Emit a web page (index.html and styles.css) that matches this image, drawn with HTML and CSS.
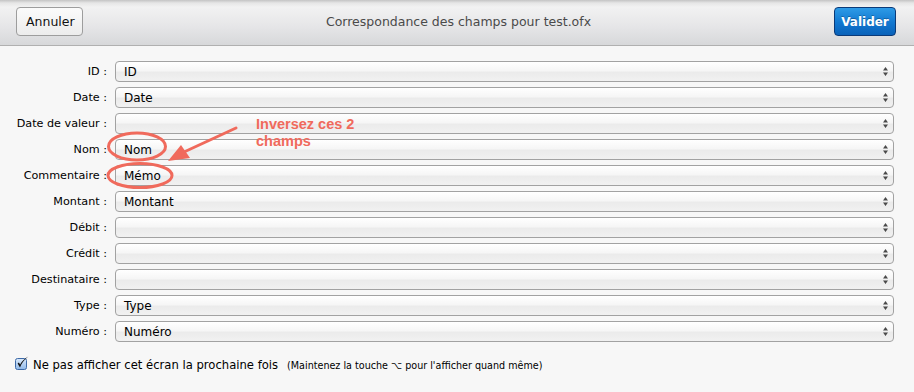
FILE: index.html
```html
<!DOCTYPE html>
<html lang="fr">
<head>
<meta charset="utf-8">
<title>Correspondance des champs</title>
<link rel="stylesheet" href="styles.css">
</head>
<body>
<div class="sheet">
  <header class="toolbar">
    <button class="btn">Annuler</button>
    <div class="title">Correspondance des champs pour test.ofx</div>
    <button class="btn primary">Valider</button>
  </header>

  <main class="form">
    <div class="row"><span class="label">ID :</span><div class="popup"><span>ID</span><svg class="step" viewBox="0 0 5 9"><path d="M2.5 0 5 3.5H0z M0 5.5h5L2.5 9z"/></svg></div></div>
    <div class="row"><span class="label">Date :</span><div class="popup"><span>Date</span><svg class="step" viewBox="0 0 5 9"><path d="M2.5 0 5 3.5H0z M0 5.5h5L2.5 9z"/></svg></div></div>
    <div class="row"><span class="label">Date de valeur :</span><div class="popup"><span></span><svg class="step" viewBox="0 0 5 9"><path d="M2.5 0 5 3.5H0z M0 5.5h5L2.5 9z"/></svg></div></div>
    <div class="row"><span class="label">Nom :</span><div class="popup"><span>Nom</span><svg class="step" viewBox="0 0 5 9"><path d="M2.5 0 5 3.5H0z M0 5.5h5L2.5 9z"/></svg></div></div>
    <div class="row"><span class="label">Commentaire :</span><div class="popup"><span>Mémo</span><svg class="step" viewBox="0 0 5 9"><path d="M2.5 0 5 3.5H0z M0 5.5h5L2.5 9z"/></svg></div></div>
    <div class="row"><span class="label">Montant :</span><div class="popup"><span>Montant</span><svg class="step" viewBox="0 0 5 9"><path d="M2.5 0 5 3.5H0z M0 5.5h5L2.5 9z"/></svg></div></div>
    <div class="row"><span class="label">Débit :</span><div class="popup"><span></span><svg class="step" viewBox="0 0 5 9"><path d="M2.5 0 5 3.5H0z M0 5.5h5L2.5 9z"/></svg></div></div>
    <div class="row"><span class="label">Crédit :</span><div class="popup"><span></span><svg class="step" viewBox="0 0 5 9"><path d="M2.5 0 5 3.5H0z M0 5.5h5L2.5 9z"/></svg></div></div>
    <div class="row"><span class="label">Destinataire :</span><div class="popup"><span></span><svg class="step" viewBox="0 0 5 9"><path d="M2.5 0 5 3.5H0z M0 5.5h5L2.5 9z"/></svg></div></div>
    <div class="row"><span class="label">Type :</span><div class="popup"><span>Type</span><svg class="step" viewBox="0 0 5 9"><path d="M2.5 0 5 3.5H0z M0 5.5h5L2.5 9z"/></svg></div></div>
    <div class="row"><span class="label">Numéro :</span><div class="popup"><span>Numéro</span><svg class="step" viewBox="0 0 5 9"><path d="M2.5 0 5 3.5H0z M0 5.5h5L2.5 9z"/></svg></div></div>
  </main>

  <footer class="options">
    <svg class="check" viewBox="0 0 14 15" width="14" height="15">
      <defs>
        <linearGradient id="cb" x1="0" y1="0" x2="0" y2="1">
          <stop offset="0" stop-color="#dbeafb"/>
          <stop offset="1" stop-color="#8fb8e8"/>
        </linearGradient>
      </defs>
      <rect x="0.5" y="2.5" width="11" height="11" rx="2" fill="url(#cb)" stroke="#3d6aa8"/>
      <path d="M2.6 7.6 5 11.6 C6.5 7.5 9 3.8 13.4 0.6 C9.2 2.6 6.8 5.6 5.1 8.6 L3.9 6.6 Z" fill="#111"/>
    </svg>
    <span class="opt-label">Ne pas afficher cet écran la prochaine fois</span>
    <span class="opt-hint">(Maintenez la touche ⌥ pour l'afficher quand même)</span>
  </footer>

  <svg class="annot" viewBox="0 0 914 392" width="914" height="392">
    <g fill="none" stroke="#f06a5c" stroke-width="3">
      <ellipse cx="137" cy="146.5" rx="28.5" ry="13.5"/>
      <ellipse cx="140" cy="175.5" rx="32" ry="12"/>
      <path d="M236 128 L184 152" stroke-linecap="round"/>
    </g>
    <path d="M168 161 L181 145 L190 158 Z" fill="#f06a5c"/>
  </svg>
  <div class="note">Inversez ces 2<br>champs</div>
</div>
</body>
</html>
```

FILE: styles.css
```css
html, body {
  margin: 0;
  padding: 0;
}
body {
  width: 914px;
  height: 392px;
  overflow: hidden;
  background: #f7f7f7;
  font-family: "DejaVu Sans", "Liberation Sans", sans-serif;
  color: #111;
}
.sheet {
  position: relative;
  width: 914px;
  height: 392px;
}
.toolbar {
  height: 46px;
  box-sizing: border-box;
  border-bottom: 1px solid #b0b0b0;
  background: linear-gradient(#c4c4c4 0, #e6e6e6 3px, #f2f2f2 7px, #e6e6e8 26px, #d7d8da 100%);
  display: flex;
  align-items: flex-start;
  padding: 7px 18px 0 16px;
}
.btn {
  height: 29px;
  box-sizing: border-box;
  padding: 0 9px;
  border: 1px solid #9d9d9d;
  border-radius: 4px;
  background: linear-gradient(#fbfbfb, #ececec);
  font-family: "DejaVu Sans", sans-serif;
  font-size: 12.5px;
  color: #111;
  width: 67px;
}
.btn.primary {
  width: 62px;
  padding: 0;
  border-color: #0b3a78;
  background: linear-gradient(#2e9be6, #1177d0 55%, #0a62b9);
  color: #fff;
  font-size: 12px;
  font-weight: bold;
  text-shadow: 0 -1px 0 rgba(0,0,0,0.25);
}
.title {
  flex: 1;
  text-align: center;
  font-size: 12.5px;
  color: #4a4a4a;
  line-height: 29px;
}
.form {
  padding: 15px 20px 0 0;
  display: flex;
  flex-direction: column;
  gap: 5px;
}
.row {
  display: grid;
  grid-template-columns: 107px 1fr;
  column-gap: 8px;
  align-items: center;
  height: 21px;
}
.label {
  text-align: right;
  font-size: 11.2px;
  white-space: nowrap;
  color: #000;
}
.popup {
  height: 21px;
  box-sizing: border-box;
  border: 1px solid #a2a2a2;
  border-radius: 4px;
  background: linear-gradient(#ffffff, #f6f6f6 45%, #ebebeb 55%, #f1f1f1);
  display: flex;
  align-items: center;
  justify-content: space-between;
  padding: 0 5px 0 8px;
  font-size: 12px;
  color: #000;
}
.step {
  width: 5px;
  height: 9px;
  fill: #4a4a4a;
}
.options {
  display: flex;
  align-items: center;
  padding: 15px 0 0 15px;
  height: 16px;
}
.check {
  margin-top: -3px;
}
.opt-label {
  font-size: 11.6px;
  margin-left: 4px;
  color: #000;
}
.opt-hint {
  font-size: 9.6px;
  margin-left: 9px;
  color: #000;
}
.annot {
  position: absolute;
  left: 0;
  top: 0;
  pointer-events: none;
}
.note {
  position: absolute;
  left: 256px;
  top: 116px;
  font-family: "Liberation Sans", sans-serif;
  font-weight: bold;
  font-size: 14.5px;
  line-height: 17px;
  color: #f06a5c;
}
```
